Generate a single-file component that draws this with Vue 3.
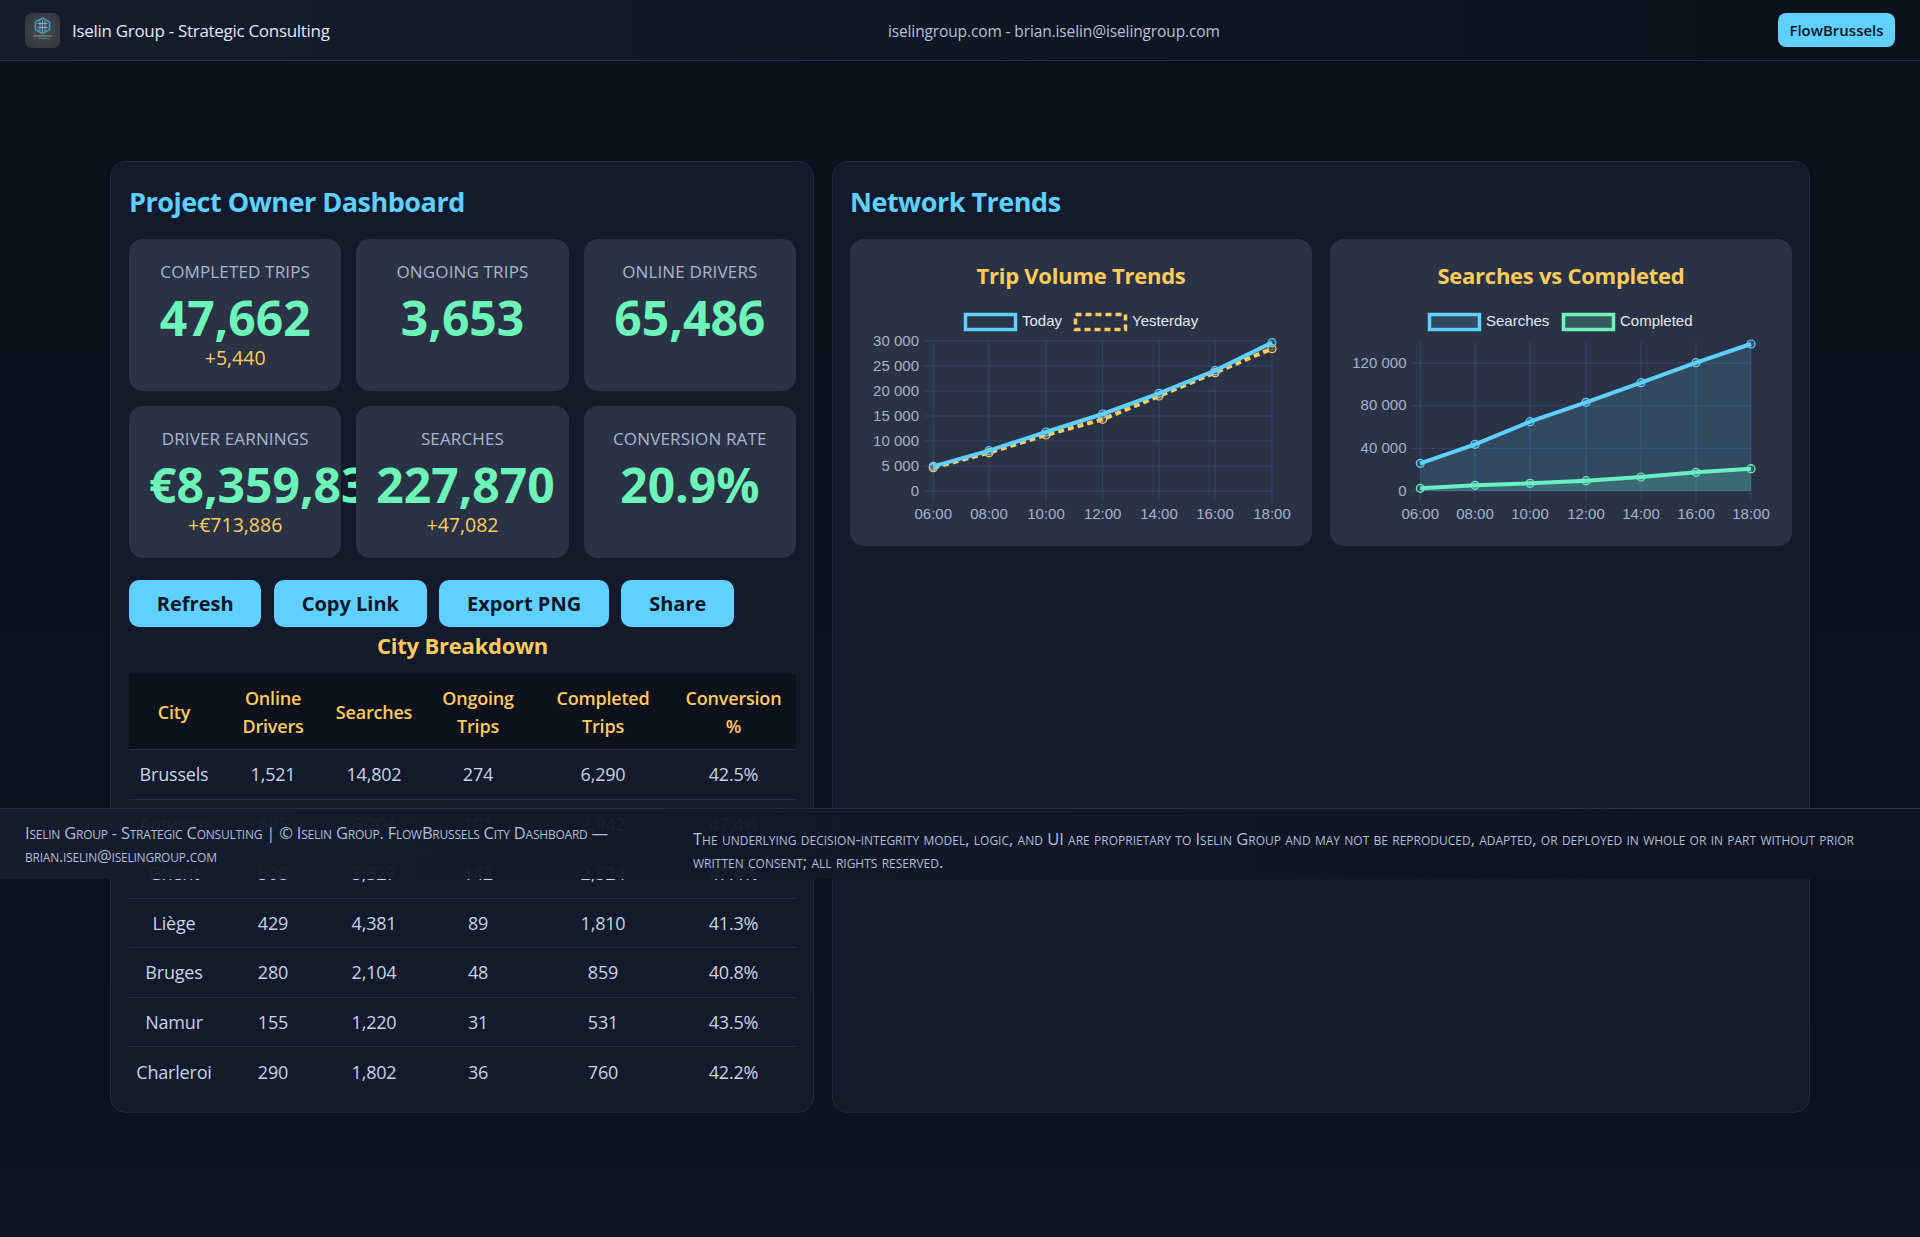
<script setup>
const kpis = [
  { label: 'COMPLETED TRIPS', value: '47,662', delta: '+5,440' },
  { label: 'ONGOING TRIPS', value: '3,653' },
  { label: 'ONLINE DRIVERS', value: '65,486' },
  { label: 'DRIVER EARNINGS', value: '€8,359,836', delta: '+€713,886' },
  { label: 'SEARCHES', value: '227,870', delta: '+47,082' },
  { label: 'CONVERSION RATE', value: '20.9%' }
]

const rows = [
  ['Brussels', '1,521', '14,802', '274', '6,290', '42.5%'],
  ['Antwerp', '695', '6,204', '191', '2,942', '47.4%'],
  ['Ghent', '508', '5,327', '142', '2,524', '47.4%'],
  ['Liège', '429', '4,381', '89', '1,810', '41.3%'],
  ['Bruges', '280', '2,104', '48', '859', '40.8%'],
  ['Namur', '155', '1,220', '31', '531', '43.5%'],
  ['Charleroi', '290', '1,802', '36', '760', '42.2%']
]

const hours = ['06:00', '08:00', '10:00', '12:00', '14:00', '16:00', '18:00']
const BLUE = '#5fd0ff'
const YELLOW = '#ffcb5c'
const GREEN = '#6df5b9'

// Pixel frames below are local to each svg (432 x 225).
const charts = [
  {
    title: 'Trip Volume Trends',
    xs: [67.3, 123, 180, 236.7, 293, 349, 406],
    top: 36,
    scale: 150 / 30000,
    axisLeft: 58,
    labelX: 53,
    ticks: [0, 5000, 10000, 15000, 20000, 25000, 30000],
    legend: [
      { x: 99.5, name: 'Today', color: BLUE, fill: 'none' },
      { x: 209.5, name: 'Yesterday', color: YELLOW, fill: 'none', dash: '6 4' }
    ],
    series: [
      { color: YELLOW, dash: '6 4', data: [4670, 7670, 11200, 14330, 19000, 23670, 28470] },
      { color: BLUE, data: [4930, 8067, 11800, 15400, 19530, 24070, 29670] }
    ]
  },
  {
    title: 'Searches vs Completed',
    xs: [74.3, 129, 184, 240, 295, 350, 405],
    top: 37,
    scale: 128 / 120000,
    axisLeft: 65,
    labelX: 60.5,
    ticks: [0, 40000, 80000, 120000],
    legend: [
      { x: 83.5, name: 'Searches', color: BLUE, fill: 'rgba(95,208,255,0.15)' },
      { x: 217.5, name: 'Completed', color: GREEN, fill: 'rgba(109,245,185,0.2)' }
    ],
    series: [
      { color: GREEN, area: 'rgba(109,245,185,0.2)', data: [2500, 5310, 7190, 9690, 13120, 17500, 20940] },
      { color: BLUE, area: 'rgba(95,208,255,0.15)', data: [25970, 43750, 64970, 83120, 101560, 120310, 137810] }
    ]
  }
]

const BASE = 186

function yOf(chart, value) {
  return BASE - value * chart.scale
}

function points(chart, serie) {
  return serie.data.map((v, i) => `${chart.xs[i]},${yOf(chart, v)}`).join(' ')
}

function areaPoints(chart, serie) {
  const last = chart.xs[chart.xs.length - 1]
  return `${chart.xs[0]},${BASE} ${points(chart, serie)} ${last},${BASE}`
}

function tickLabel(value) {
  return String(value).replace(/\B(?=(\d{3})+$)/g, ' ')
}
</script>

<template>
  <div class="page">
    <header class="topbar">
      <div class="brand">
        <div class="logo">
          <svg width="35" height="35" viewBox="0 0 35 35">
            <path d="M17.5 5 L24.5 9 V16.5 L17.5 20.5 L10.5 16.5 V9 Z" fill="#2c4a63" stroke="#4f93b8" stroke-width="1.6" />
            <path d="M15 8 V18 M17.5 7 V19 M20 8 V18 M12.5 10.5 H22.5 M12.5 14.5 H22.5" stroke="#aab8c2" stroke-width="0.8" />
            <path d="M8.5 23 H26.5" stroke="#8d9499" stroke-width="1" />
            <path d="M13 25.5 H24" stroke="#6b7176" stroke-width="0.8" />
          </svg>
        </div>
        <span class="brand__name">Iselin Group - Strategic Consulting</span>
      </div>
      <span class="topbar__contact">iselingroup.com - brian.iselin@iselingroup.com</span>
      <button class="topbar__tag">FlowBrussels</button>
    </header>

    <main class="layout">
      <section class="panel panel--left">
        <h2 class="panel__title">Project Owner Dashboard</h2>
        <div class="kpis">
          <div v-for="k in kpis" :key="k.label" class="kpi">
            <div class="kpi__label">{{ k.label }}</div>
            <div class="kpi__value">{{ k.value }}</div>
            <div v-if="k.delta" class="kpi__delta">{{ k.delta }}</div>
          </div>
        </div>

        <div class="actions">
          <button class="btn">Refresh</button>
          <button class="btn">Copy Link</button>
          <button class="btn">Export PNG</button>
          <button class="btn">Share</button>
        </div>

        <h3 class="breakdown">City Breakdown</h3>
        <table class="cities">
          <colgroup>
            <col style="width: 90px" />
            <col style="width: 108px" />
            <col style="width: 94px" />
            <col style="width: 114px" />
            <col style="width: 136px" />
            <col style="width: 125px" />
          </colgroup>
          <thead>
            <tr>
              <th>City</th>
              <th>Online<br />Drivers</th>
              <th>Searches</th>
              <th>Ongoing<br />Trips</th>
              <th>Completed<br />Trips</th>
              <th>Conversion<br />%</th>
            </tr>
          </thead>
          <tbody>
            <tr v-for="r in rows" :key="r[0]">
              <td v-for="(c, i) in r" :key="i">{{ c }}</td>
            </tr>
          </tbody>
        </table>
      </section>

      <section class="panel">
        <h2 class="panel__title">Network Trends</h2>
        <div class="charts">
          <div v-for="c in charts" :key="c.title" class="chart">
            <h3 class="chart__title">{{ c.title }}</h3>
            <svg class="chart__svg" width="432" height="225" viewBox="0 0 432 225">
              <g v-for="l in c.legend" :key="l.name">
                <rect :x="l.x" y="9.5" width="50" height="15" :fill="l.fill" :stroke="l.color" stroke-width="3.5" :stroke-dasharray="l.dash" />
                <text :x="l.x + 56.5" y="20.5" class="legend">{{ l.name }}</text>
              </g>

              <g v-for="t in c.ticks" :key="t">
                <line :x1="c.axisLeft" :x2="c.xs[6]" :y1="yOf(c, t)" :y2="yOf(c, t)" class="grid" />
                <text :x="c.labelX" :y="yOf(c, t) + 4.5" text-anchor="end" class="tick">{{ tickLabel(t) }}</text>
              </g>
              <g v-for="(x, i) in c.xs" :key="x">
                <line :x1="x" :x2="x" :y1="c.top" :y2="197" class="grid" />
                <text :x="x" y="214" text-anchor="middle" class="tick">{{ hours[i] }}</text>
              </g>

              <g v-for="(s, n) in c.series" :key="n">
                <polygon v-if="s.area" :points="areaPoints(c, s)" :fill="s.area" />
                <polyline :points="points(c, s)" fill="none" :stroke="s.color" stroke-width="4" :stroke-dasharray="s.dash" />
                <circle
                  v-for="(v, i) in s.data"
                  :key="i"
                  :cx="c.xs[i]"
                  :cy="yOf(c, v)"
                  r="4"
                  :fill="s.color"
                  fill-opacity="0.2"
                  :stroke="s.color"
                  stroke-width="1.2"
                />
              </g>
            </svg>
          </div>
        </div>
      </section>
    </main>

    <footer class="footer">
      <div class="footer__left">
        Iselin Group - Strategic Consulting | © Iselin Group. FlowBrussels City Dashboard — brian.iselin@iselingroup.com
      </div>
      <div class="footer__right">
        The underlying decision-integrity model, logic, and UI are proprietary to Iselin Group and may not be reproduced, adapted, or deployed in whole or in part without prior written consent; all rights reserved.
      </div>
    </footer>
  </div>
</template>

<style>
html,
body {
  margin: 0;
  background: #0b101b;
}
</style>

<style scoped>
.page {
  position: relative;
  min-height: 1237px;
  background: linear-gradient(180deg, #0b101b, #0d131f);
  font-family: "Open Sans", "Noto Sans", sans-serif;
  color: #d5deec;
}

.topbar {
  display: flex;
  align-items: center;
  justify-content: space-between;
  height: 60px;
  padding: 0 25px;
  background: linear-gradient(90deg, #141c2e, #0b101a);
  border-bottom: 1px solid #25304a;
}

.brand {
  display: flex;
  align-items: center;
  gap: 12px;
}

.logo {
  width: 35px;
  height: 35px;
  border-radius: 7px;
  overflow: hidden;
  background: radial-gradient(circle, #4b4e52, #2f3337);
}

.logo svg {
  display: block;
}

.brand__name {
  font-size: 17px;
  letter-spacing: -0.3px;
  color: #e3e9f3;
}

.topbar__contact {
  padding-top: 1px;
  font-size: 15.5px;
  letter-spacing: -0.12px;
  color: #b6c2d6;
}

.topbar__tag {
  width: 117px;
  height: 34px;
  padding: 0;
  border: 0;
  border-radius: 8px;
  background: #5fd0ff;
  color: #0f1626;
  font: 600 15px "Open Sans", sans-serif;
}

.layout {
  display: grid;
  grid-template-columns: 704px 978px;
  gap: 18px;
  width: 1700px;
  margin: 0 auto;
  padding-top: 100px;
}

.panel {
  box-sizing: border-box;
  padding: 21px 17px 16px;
  background: #121a2b;
  border: 1px solid #1f2a40;
  border-radius: 16px;
}

.panel--left {
  padding-left: 18px;
}

.panel__title {
  margin: 0 0 18px;
  font-size: 27px;
  line-height: 38px;
  font-weight: 700;
  letter-spacing: -0.5px;
  color: #5fd0ff;
}

.kpis {
  display: grid;
  grid-template-columns: repeat(3, 1fr);
  grid-auto-rows: 152px;
  gap: 15px;
}

.kpi {
  position: relative;
  min-width: 0;
  padding: 21px 20px 20px;
  background: #2a3345;
  border-radius: 14px;
  text-align: center;
  box-sizing: border-box;
  white-space: nowrap;
}

.kpi__label {
  font-size: 17px;
  line-height: 24px;
  letter-spacing: 0.15px;
  color: #a9b5d0;
}

.kpi__value {
  margin-top: 5px;
  font-size: 48px;
  line-height: 58px;
  font-weight: 700;
  color: #6df5b9;
}

.kpi__delta {
  margin-top: -1px;
  font-size: 19.5px;
  line-height: 24px;
  font-weight: 500;
  color: #ffcb5c;
}

.actions {
  display: flex;
  gap: 12.4px;
  margin-top: 22px;
}

.btn {
  height: 47px;
  padding: 0 27.85px;
  border: 0;
  border-radius: 10px;
  background: #5fd0ff;
  color: #0f1626;
  font: 700 20px "Open Sans", sans-serif;
}

.breakdown {
  margin: 3px 0 14px;
  font-size: 22px;
  line-height: 30px;
  font-weight: 700;
  letter-spacing: -0.2px;
  text-align: center;
  color: #ffcb5c;
}

.cities {
  width: 667px;
  table-layout: fixed;
  border-collapse: collapse;
}

.cities th {
  height: 75px;
  padding: 0;
  background: #0c111c;
  font-size: 18px;
  line-height: 28px;
  font-weight: 600;
  letter-spacing: -0.2px;
  color: #ffcb5c;
  border-bottom: 1px solid #223048;
}

.cities td {
  height: 49.5px;
  padding: 0;
  box-sizing: border-box;
  font-size: 18px;
  letter-spacing: -0.2px;
  text-align: center;
  color: #c8d3e6;
  border-bottom: 1px solid #223048;
}

.cities tbody tr:last-child td {
  border-bottom: 0;
}

.charts {
  display: grid;
  grid-template-columns: repeat(2, 1fr);
  gap: 18px;
}

.chart {
  min-width: 0;
  padding: 21px 15px 16px;
  background: #2a3345;
  border-radius: 14px;
}

.chart__title {
  margin: 0 0 15px;
  font-size: 22px;
  line-height: 30px;
  font-weight: 700;
  letter-spacing: -0.25px;
  text-align: center;
  color: #ffcb5c;
}

.chart__svg {
  display: block;
  margin-left: 1px;
  overflow: visible;
}

.grid {
  stroke: #34456e;
  stroke-width: 1;
}

.tick {
  font: 15px "Liberation Sans", Arial, sans-serif;
  fill: #a5b1cc;
}

.legend {
  font: 15px "Liberation Sans", Arial, sans-serif;
  fill: #e3e8f2;
}

.footer {
  position: absolute;
  top: 808px;
  left: 0;
  right: 0;
  box-sizing: border-box;
  display: flex;
  gap: 50px;
  height: 71px;
  padding: 13px 25px 0;
  border-top: 1px solid #25304a;
  background: linear-gradient(90deg, rgba(20, 28, 46, 0.96), rgba(13, 19, 31, 0.96));
  font-variant: small-caps;
  font-size: 16.5px;
  line-height: 22.5px;
  letter-spacing: -0.23px;
  color: #b0bed8;
}

.footer__left {
  flex: 0 0 618px;
}

.footer__right {
  flex: 1;
  padding-top: 6px;
  letter-spacing: 0;
}
</style>
